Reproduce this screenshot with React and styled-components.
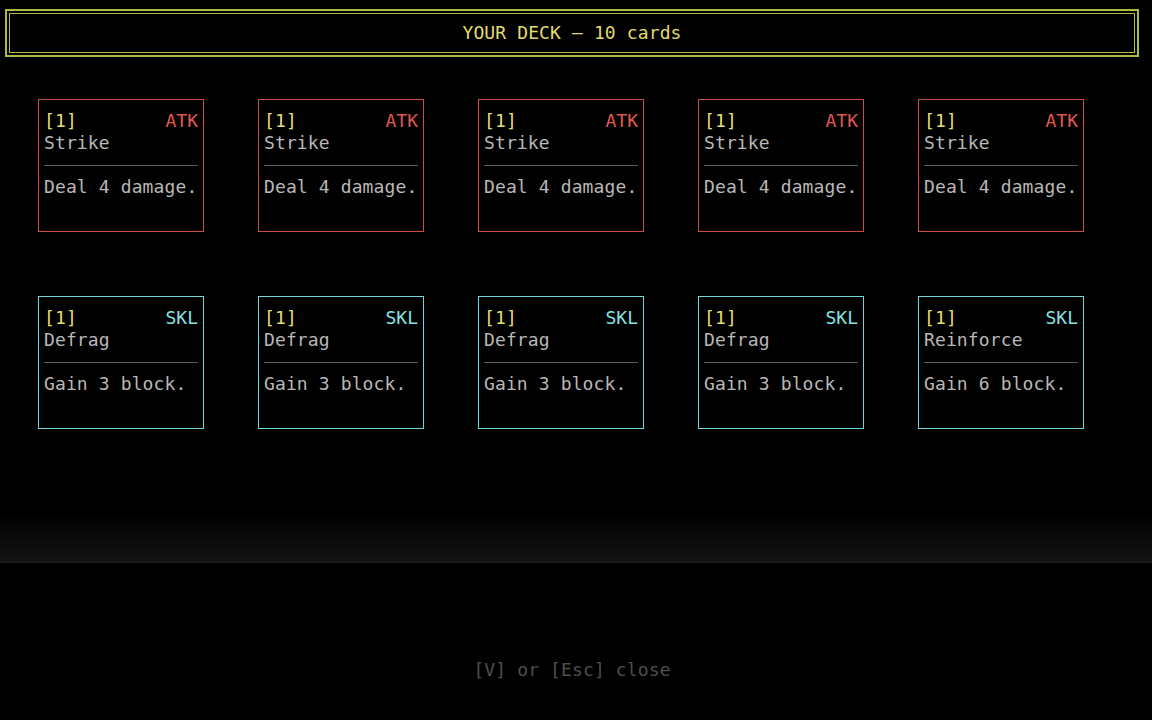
import styled, { createGlobalStyle } from 'styled-components';

const Global = createGlobalStyle`
    html, body {
        margin:0;
        padding:0;
        background:#000;
    }
    body {
        font-family:"DejaVu Sans Mono", "Liberation Mono", monospace;
        font-size:18px;
        letter-spacing:0.12px;
        color:#b4b4b4;
    }
`;

const Screen = styled.div`
    width:1152px;
    height:720px;
    display:flex;
    flex-direction:column;
    background:#000;
    overflow:hidden;
`;

const Header = styled.header`
    margin:9px 13px 0 5px;
    height:48px;
    box-sizing:border-box;
    border:2px solid #b0b840;
    box-shadow:inset 0 0 0 2px #000, inset 0 0 0 3px #b0b840;
    display:flex;
    align-items:center;
    justify-content:center;
    color:#e2dc6c;
    line-height:22px;
    padding-bottom:1px;
`;

const Grid = styled.div`
    display:grid;
    grid-template-columns:repeat(5, 166px);
    grid-auto-rows:133px;
    column-gap:54px;
    row-gap:64px;
    padding:42px 0 0 38px;
`;

const Card = styled.div`
    box-sizing:border-box;
    border:1px solid ${p => p.$border};
    padding:10px 5px 0 5px;
    line-height:22px;
    white-space:nowrap;
`;

const TopRow = styled.div`
    display:flex;
    justify-content:space-between;
`;

const Cost = styled.span`
    color:#e6de6e;
`;

const Kind = styled.span`
    color:${p => p.$color};
    letter-spacing:0;
`;

const Name = styled.div`
    color:#b8b8b8;
`;

const Rule = styled.div`
    height:22px;
    display:flex;
    align-items:center;
    &::after {
        content:"";
        flex:1;
        height:1px;
        background:#5c5c5c;
    }
`;

const Desc = styled.div`
    color:#b8b8b8;
`;

const Fade = styled.div`
    margin-top:85px;
    height:48px;
    background:linear-gradient(to bottom, rgba(20,20,20,0), #141414);
    border-bottom:1px solid #1b1b1b;
`;

const Footer = styled.div`
    margin:96px 13px 0 5px;
    text-align:center;
    color:#4e4e4e;
    line-height:22px;
`;

const types = {
    ATK: { border: '#cc5048', color: '#e2584e' },
    SKL: { border: '#6cd8da', color: '#84e4e4' },
};

const deck = [
    { cost: 1, type: 'ATK', name: 'Strike', text: 'Deal 4 damage.' },
    { cost: 1, type: 'ATK', name: 'Strike', text: 'Deal 4 damage.' },
    { cost: 1, type: 'ATK', name: 'Strike', text: 'Deal 4 damage.' },
    { cost: 1, type: 'ATK', name: 'Strike', text: 'Deal 4 damage.' },
    { cost: 1, type: 'ATK', name: 'Strike', text: 'Deal 4 damage.' },
    { cost: 1, type: 'SKL', name: 'Defrag', text: 'Gain 3 block.' },
    { cost: 1, type: 'SKL', name: 'Defrag', text: 'Gain 3 block.' },
    { cost: 1, type: 'SKL', name: 'Defrag', text: 'Gain 3 block.' },
    { cost: 1, type: 'SKL', name: 'Defrag', text: 'Gain 3 block.' },
    { cost: 1, type: 'SKL', name: 'Reinforce', text: 'Gain 6 block.' },
];

const App = () => {
    return (
        <Screen>
            <Global />
            <Header>YOUR DECK — {deck.length} cards</Header>
            <Grid>
                {deck.map((card, i) => {
                    const t = types[card.type];
                    return (
                        <Card key={i} $border={t.border}>
                            <TopRow>
                                <Cost>[{card.cost}]</Cost>
                                <Kind $color={t.color}>{card.type}</Kind>
                            </TopRow>
                            <Name>{card.name}</Name>
                            <Rule />
                            <Desc>{card.text}</Desc>
                        </Card>
                    )
                })}
            </Grid>
            <Fade />
            <Footer>[V] or [Esc] close</Footer>
        </Screen>
    )
}

export default App;
